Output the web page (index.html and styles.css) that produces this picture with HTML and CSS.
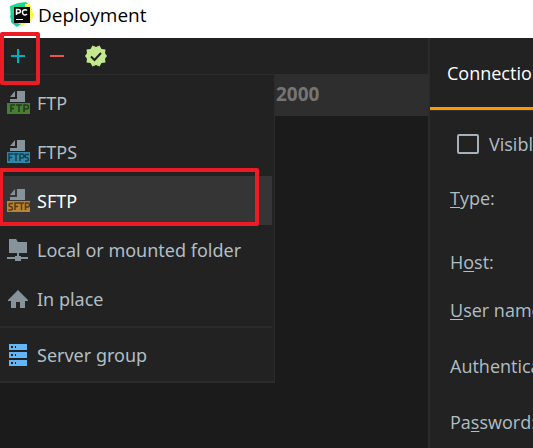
FILE: index.html
```html
<!DOCTYPE html>
<html lang="en">
<head>
<meta charset="utf-8">
<title>Deployment</title>
<link rel="stylesheet" href="styles.css">
</head>
<body>
<div class="window">
  <header class="titlebar">
    <svg class="logo" viewBox="0 0 24 26" aria-hidden="true">
      <path d="M0 4 8 1l8-1 5 5v10l-6 6-9 3-5-4z" fill="#21d789"/>
      <path d="M15 2h5l2 6 2 5-3 6-5 3-5 2-4-2 8-4z" fill="#fcf84a"/>
      <path d="M0 14 5 9v12l6 1-4 3-5-4z" fill="#1fc7a6"/>
      <rect x="4" y="5" width="16" height="16" fill="#080808"/>
      <path d="M6.500 13V7.500h2.200a1.700 1.700 0 0 1 0 3.500H6.500M17 8.600a2.600 2.600 0 1 0 0 3.400" fill="none" stroke="#fff" stroke-width="1.500"/>
      <rect x="6" y="17" width="7" height="1" fill="#fff"/>
    </svg>
    <h1 class="title">Deployment</h1>
  </header>
  <div class="content">
    <aside class="servers">
      <div class="toolbar">
        <button class="tool" type="button" aria-label="Add">
          <svg viewBox="0 0 24 24" width="24" height="24"><path d="M12 5v14M5 12h14" stroke="#00acc1" stroke-width="2"/></svg>
        </button>
        <button class="tool" type="button" aria-label="Remove">
          <svg viewBox="0 0 24 24" width="24" height="24"><path d="M5 12h14" stroke="#ef5350" stroke-width="2"/></svg>
        </button>
        <button class="tool" type="button" aria-label="Use as default">
          <svg viewBox="0 0 24 24" width="24" height="24"><path d="m12 3 3.500-1.500L17.500 5l4 .5-.5 3.700L23 12l-2 2.800.5 3.700-4 .5-2 3.500L12 21l-3.500 1.500L6.500 19l-4-.5.5-3.700L1 12l2-2.800-.5-3.700 4-.5 2-3.500z" fill="#c3e88d"/><path d="m7 12.500 3.500 3.500L17 9" fill="none" stroke="#222" stroke-width="2"/></svg>
        </button>
      </div>
      <div class="server-list">
        <div class="server">2000</div>
      </div>
      <div class="menu" role="menu">
        <button class="item" type="button" role="menuitem">
          <svg class="icon" viewBox="0 0 24 24"><path d="M11 0h8v11H4V8h7z" fill="#87939a"/><path d="m4 6 5-6v6z" fill="#87939a"/><path d="M1 12h23v11H1z" fill="#467f32"/><path d="M5 21v-7h4M5 17.500h3M10 14h6M13 14v7M18 21v-7h2.500a2 2 0 0 1 0 4H18" fill="none" stroke="#223b1b" stroke-width="1.500"/></svg>
          FTP
        </button>
        <button class="item" type="button" role="menuitem">
          <svg class="icon" viewBox="0 0 24 24"><path d="M11 0h8v11H4V8h7z" fill="#87939a"/><path d="m4 6 5-6v6z" fill="#87939a"/><path d="M1 12h23v11H1z" fill="#2f86a6"/><path d="M3 21v-7h4M3 17.500h3M7.500 14h5M10 14v7M14 21v-7h2a2 2 0 0 1 0 4h-2M23 14.500h-2.500c-2 0-2 3 0 3s3 3.500 0 3.500H19" fill="none" stroke="#173f50" stroke-width="1.500"/></svg>
          FTPS
        </button>
        <button class="item item-selected" type="button" role="menuitem">
          <svg class="icon" viewBox="0 0 24 24"><path d="M11 0h8v11H4V8h7z" fill="#87939a"/><path d="m4 6 5-6v6z" fill="#87939a"/><path d="M1 12h23v11H1z" fill="#b98330"/><path d="M7 14.500H4.500c-2 0-2 3 0 3s3 3.500 0 3.500H2.500M9 21v-7h4M9 17.500h3M13 14h5M15.500 14v7M19.500 21v-7h2a2 2 0 0 1 0 4h-2" fill="none" stroke="#573c17" stroke-width="1.500"/></svg>
          SFTP
        </button>
        <button class="item" type="button" role="menuitem">
          <svg class="icon" viewBox="0 0 24 24"><path d="M3 1h7l2 3h9v11H3z" fill="#87939a"/><path d="M11 15h2v3h2v1h7v2h-7v2H9v-2H1v-2h8v-1h2z" fill="#87939a"/></svg>
          Local or mounted folder
        </button>
        <button class="item" type="button" role="menuitem">
          <svg class="icon" viewBox="0 0 24 24"><path d="M12 3 22 13v1h-3v7h-5v-6h-4v6H5v-7H2v-1z" fill="#87939a"/></svg>
          In place
        </button>
        <hr class="separator">
        <button class="item" type="button" role="menuitem">
          <svg class="icon" viewBox="0 0 24 24"><path d="M3 1h18v6H3zM3 9h18v6H3zM3 17h18v6H3z" fill="#64b5f6"/><path d="M5 3h2v2H5zM9 3h1v2H9zM5 11h2v2H5zM9 11h1v2H9zM5 19h2v2H5zM9 19h1v2H9z" fill="#222"/></svg>
          Server group
        </button>
      </div>
      <div class="mark mark-add"></div>
      <div class="mark mark-sftp"></div>
    </aside>
    <main class="settings">
      <div class="tabs"><button class="tab" type="button">Connection</button></div>
      <div class="form">
        <label class="check"><input class="box" type="checkbox">Visible</label>
        <div class="field field-type"><u>T</u>ype:</div>
        <div class="field">H<u>o</u>st:</div>
        <div class="field field-user"><u>U</u>ser name:</div>
        <div class="field">Authentication:</div>
        <div class="field">Pa<u>s</u>sword:</div>
      </div>
    </main>
  </div>
</div>
</body>
</html>
```
FILE: styles.css
```css
* {
  box-sizing: border-box;
}

body {
  margin: 0;
  background: #1b1b1b;
  color: #b0bec5;
  font: 18px/24px "Noto Sans", "Open Sans", sans-serif;
}

button {
  border: 0;
  padding: 0;
  background: none;
  color: inherit;
  font: inherit;
}

svg {
  display: block;
}

.window {
  display: flex;
  flex-direction: column;
  height: 100vh;
  overflow: hidden;
}

.titlebar {
  display: flex;
  align-items: center;
  gap: 4px;
  height: 38px;
  padding: 0 10px 8px;
  background: #fff;
  color: #000;
}

.logo {
  width: 24px;
  height: 26px;
}

.title {
  margin: 0;
  font-family: "Open Sans", sans-serif;
  font-size: 19px;
  font-weight: 400;
}

.content {
  display: flex;
  flex: 1;
  min-height: 0;
}

.servers {
  position: relative;
  flex: 0 0 430px;
  border-right: 2px solid #2b2b2b;
}

.toolbar {
  display: flex;
  align-items: center;
  gap: 15px;
  height: 36px;
  padding: 0 6px;
  background: #222;
}

.server {
  height: 42px;
  padding: 8px 0 0 276px;
  background: #2e2e2e;
  color: #757575;
  font-size: 19px;
  font-weight: 700;
}

.menu {
  position: absolute;
  top: 36px;
  left: 0;
  width: 275px;
  padding: 3px 2px 2px 0;
  border: solid #2b2b2b;
  border-width: 1px 1px 2px 0;
  background: #222;
}

.item {
  display: flex;
  align-items: center;
  gap: 7px;
  width: 100%;
  height: 49px;
  padding: 0 6px;
  text-align: left;
}

.item-selected {
  background: #353535;
  color: #fff;
}

.icon {
  width: 24px;
  height: 24px;
}

.separator {
  height: 2px;
  margin: 3px 0 2px;
  border: 0;
  background: #2b2b2b;
}

.mark {
  position: absolute;
  border: 4px solid #ed1c24;
  border-radius: 2px;
  pointer-events: none;
}

.mark-add {
  top: -6px;
  left: 0;
  width: 40px;
  height: 53px;
}

.mark-sftp {
  top: 130px;
  left: -1px;
  width: 260px;
  height: 58px;
}

.settings {
  flex: 1;
  min-width: 0;
  overflow: hidden;
  background: #222;
  font-family: "Open Sans", sans-serif;
  white-space: nowrap;
}

.tabs {
  border-bottom: 1px solid #333;
}

.tab {
  height: 72px;
  padding: 0 17px;
  border-bottom: 3px solid #ff9800;
  color: #fff;
}

.form {
  padding: 21px 20px;
}

.check {
  display: flex;
  align-items: center;
  gap: 10px;
  padding-left: 7px;
}

.box {
  flex: none;
  appearance: none;
  width: 22px;
  height: 20px;
  margin: 0;
  border: 2px solid #a5b2b9;
  border-radius: 2px;
}

.field {
  margin-top: 32px;
}

.field-type {
  margin: 30px 0 40px;
}

.field-user {
  margin-top: 24px;
}

u {
  text-decoration-thickness: 1px;
  text-underline-offset: 2px;
}
```
